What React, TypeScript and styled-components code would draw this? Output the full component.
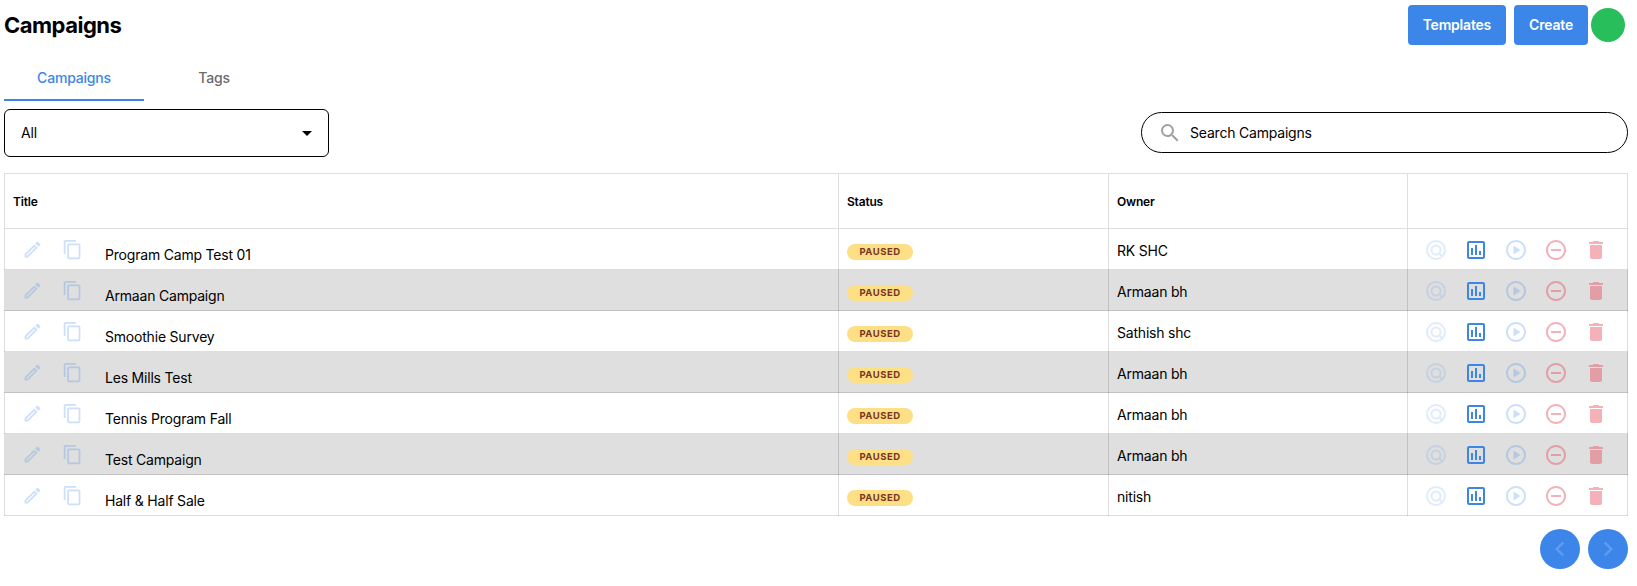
import React from "react";
import styled, { createGlobalStyle } from "styled-components";
import {
  MdOutlineEdit,
  MdOutlineContentCopy,
  MdOutlineAssessment,
  MdOutlinePlayCircle,
  MdOutlineRemoveCircleOutline,
  MdDelete,
  MdSearch,
  MdChevronLeft,
  MdChevronRight,
} from "react-icons/md";

const GlobalStyle = createGlobalStyle`
  html, body {
    margin: 0;
    background: #fff;
    font-family: Inter, "Liberation Sans", sans-serif;
    color: #000;
  }
  * {
    box-sizing: border-box;
  }
`;

const campaigns = [
  { title: "Program Camp Test 01", owner: "RK SHC" },
  { title: "Armaan Campaign", owner: "Armaan bh" },
  { title: "Smoothie Survey", owner: "Sathish shc" },
  { title: "Les Mills Test", owner: "Armaan bh" },
  { title: "Tennis Program Fall", owner: "Armaan bh" },
  { title: "Test Campaign", owner: "Armaan bh" },
  { title: "Half & Half Sale", owner: "nitish" },
];

// no package has this ring icon, so it is drawn by hand
const TargetIcon = () => (
  <svg width="24" height="24" viewBox="0 0 24 24" fill="none" stroke="#3b86e8" strokeWidth="2" opacity="0.15">
    <circle cx="12" cy="12" r="9" />
    <circle cx="12" cy="12" r="4.5" />
    <path d="M15.5 15.5l3 3" />
  </svg>
);

const App = () => {
  return (
    <Page>
      <GlobalStyle />
      <Header>
        <PageTitle>Campaigns</PageTitle>
        <HeaderActions>
          <PrimaryButton type="button">Templates</PrimaryButton>
          <PrimaryButton type="button">Create</PrimaryButton>
          <StatusDot />
        </HeaderActions>
      </Header>
      <Tabs>
        <Tab $active>Campaigns</Tab>
        <Tab>Tags</Tab>
      </Tabs>
      <Filters>
        <SelectBox>
          All
          <Caret />
        </SelectBox>
        <SearchBox>
          <MdSearch size="24" color="#a0a0a0" />
          Search Campaigns
        </SearchBox>
      </Filters>
      <Table>
        <colgroup>
          <col width="834" />
          <col width="270" />
          <col width="299" />
          <col />
        </colgroup>
        <thead>
          <tr>
            <HeadCell>Title</HeadCell>
            <HeadCell>Status</HeadCell>
            <HeadCell>Owner</HeadCell>
            <HeadCell />
          </tr>
        </thead>
        <tbody>
          {campaigns.map((campaign, i) => (
            <Row key={campaign.title} $striped={i % 2 === 1}>
              <Cell>
                <TitleWrap>
                  <MdOutlineEdit size="21" color="#3b86e8" opacity="0.25" />
                  <MdOutlineContentCopy size="21" color="#3b86e8" opacity="0.25" />
                  <TitleText>{campaign.title}</TitleText>
                </TitleWrap>
              </Cell>
              <TextCell>
                <Badge>PAUSED</Badge>
              </TextCell>
              <TextCell>{campaign.owner}</TextCell>
              <TextCell>
                <ActionIcons>
                  <TargetIcon />
                  <MdOutlineAssessment size="24" color="#3b86e8" />
                  <MdOutlinePlayCircle size="24" color="#3b86e8" opacity="0.25" />
                  <MdOutlineRemoveCircleOutline size="24" color="#e53e50" opacity="0.4" />
                  <MdDelete size="24" color="#e53e50" opacity="0.4" />
                </ActionIcons>
              </TextCell>
            </Row>
          ))}
        </tbody>
      </Table>
      <Pager>
        <PagerButton type="button">
          <MdChevronLeft size="30" color="#5f9bed" />
        </PagerButton>
        <PagerButton type="button">
          <MdChevronRight size="30" color="#5f9bed" />
        </PagerButton>
      </Pager>
    </Page>
  );
};

const Page = styled.div`
  width: 1637px;
  height: 586px;
  padding: 5px 9px 0 4px;
  overflow: hidden;
  letter-spacing: -0.2px;
`;

const Header = styled.div`
  display: flex;
  justify-content: space-between;
  height: 40px;
`;

const PageTitle = styled.h1`
  margin: 0;
  font-size: 22px;
  line-height: 40px;
  font-weight: 700;
  letter-spacing: -0.5px;
`;

const HeaderActions = styled.div`
  display: flex;
  align-items: center;
  gap: 8px;
`;

const PrimaryButton = styled.button`
  height: 40px;
  padding: 0 15px 2px;
  border: none;
  border-radius: 4px;
  background: #3b86e8;
  color: #fff;
  font-family: inherit;
  font-size: 14px;
  font-weight: 600;
  letter-spacing: -0.2px;
`;

const StatusDot = styled.span`
  width: 34px;
  height: 34px;
  margin-left: -5px;
  margin-right: 3px;
  border-radius: 50%;
  background: #28be5c;
`;

const Tabs = styled.div`
  display: flex;
  margin-top: 11px;
`;

const Tab = styled.div<{ $active?: boolean }>`
  width: 140px;
  height: 45px;
  text-align: center;
  line-height: 44px;
  font-size: 14px;
  font-weight: 500;
  color: ${(props) => (props.$active ? "#3b86e8" : "#6b6b6b")};
  border-bottom: 2px solid ${(props) => (props.$active ? "#3b86e8" : "transparent")};
`;

const Filters = styled.div`
  display: flex;
  justify-content: space-between;
  align-items: center;
  margin-top: 8px;
  height: 48px;
`;

const SelectBox = styled.div`
  position: relative;
  width: 325px;
  height: 48px;
  padding-left: 16px;
  border: 1px solid #000;
  border-radius: 6px;
  line-height: 46px;
  font-size: 14px;
`;

const Caret = styled.span`
  position: absolute;
  right: 16px;
  top: 21px;
  border-left: 5px solid transparent;
  border-right: 5px solid transparent;
  border-top: 5px solid #000;
`;

const SearchBox = styled.div`
  display: flex;
  align-items: center;
  gap: 8px;
  width: 487px;
  height: 41px;
  margin-bottom: 1px;
  padding-left: 16px;
  border: 1px solid #000;
  border-radius: 21px;
  font-size: 14px;
`;

const Table = styled.table`
  width: 100%;
  margin-top: 16px;
  border-collapse: collapse;
  table-layout: fixed;
  font-size: 14px;
`;

const HeadCell = styled.th`
  height: 55px;
  padding: 0 8px;
  border: 1px solid #dedede;
  text-align: left;
  font-size: 12px;
  font-weight: 600;
`;

const Row = styled.tr<{ $striped: boolean }>`
  height: 41px;
  background: ${(props) => (props.$striped ? "#dfdfdf" : "#fff")};
`;

const Cell = styled.td`
  padding: 0 8px;
  border: 1px solid rgba(0, 0, 0, 0.13);
`;

const TextCell = styled(Cell)`
  padding-top: 2px;
`;

const TitleWrap = styled.div`
  display: flex;
  align-items: center;
  gap: 19px;
  padding-left: 9px;
`;

const TitleText = styled.span`
  margin-left: 3px;
  padding-top: 11px;
`;

const Badge = styled.span`
  display: inline-block;
  width: 66px;
  height: 16px;
  border-radius: 8px;
  background: #fddf85;
  color: #7b341e;
  text-align: center;
  line-height: 16px;
  font-size: 9.5px;
  font-weight: 700;
  letter-spacing: 0.5px;
`;

const ActionIcons = styled.div`
  display: flex;
  gap: 16px;
  padding-left: 8px;
`;

const Pager = styled.div`
  display: flex;
  justify-content: flex-end;
  gap: 8px;
  margin-top: 13px;
`;

const PagerButton = styled.button`
  display: flex;
  align-items: center;
  justify-content: center;
  width: 40px;
  height: 40px;
  padding: 0;
  border: none;
  border-radius: 50%;
  background: #3b86e8;
`;

export default App;
